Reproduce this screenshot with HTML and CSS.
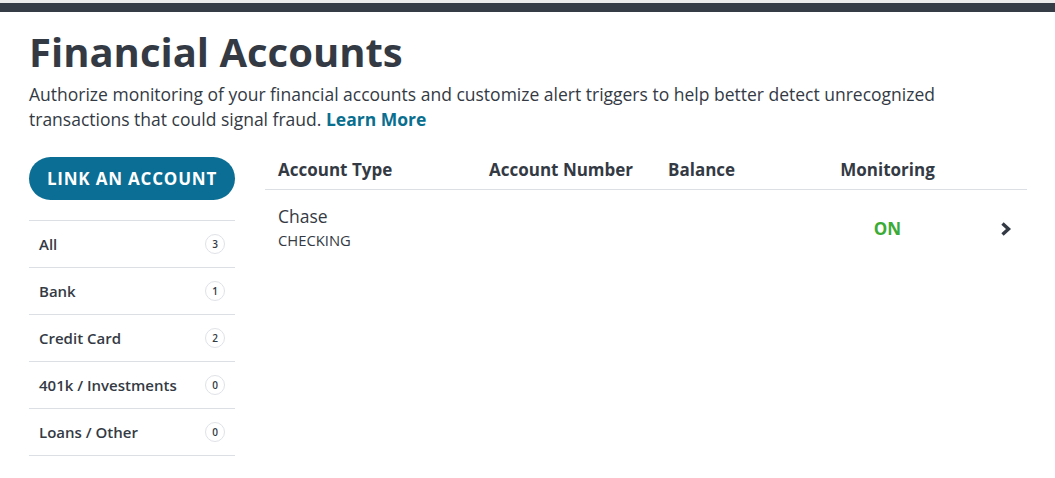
FILE: index.html
```html
<!DOCTYPE html>
<html lang="en">
<head>
<meta charset="utf-8">
<title>Financial Accounts</title>
<link rel="stylesheet" href="styles.css">
</head>
<body>
<div class="topbar"></div>
<main class="page">
  <h1 class="title">Financial Accounts</h1>
  <p class="intro">Authorize monitoring of your financial accounts and customize alert triggers to help better detect unrecognized transactions that could signal fraud. <a class="learn" href="#">Learn More</a></p>
  <div class="layout">
    <aside class="sidebar">
      <button class="link-btn">LINK AN ACCOUNT</button>
      <ul class="filters">
        <li class="filter"><span>All</span><span class="badge">3</span></li>
        <li class="filter"><span>Bank</span><span class="badge">1</span></li>
        <li class="filter"><span>Credit Card</span><span class="badge">2</span></li>
        <li class="filter"><span>401k / Investments</span><span class="badge">0</span></li>
        <li class="filter"><span>Loans / Other</span><span class="badge">0</span></li>
      </ul>
    </aside>
    <section class="table">
      <div class="row head">
        <div>Account Type</div>
        <div>Account Number</div>
        <div>Balance</div>
        <div class="center">Monitoring</div>
        <div></div>
      </div>
      <div class="row item">
        <div class="acct">
          <div class="acct-name">Chase</div>
          <div class="acct-type">CHECKING</div>
        </div>
        <div></div>
        <div></div>
        <div class="center status">ON</div>
        <div class="chev">
          <svg width="12" height="16" viewBox="0 0 12 16"><path d="M2.5 2.5 L8.5 8 L2.5 13.5" fill="none" stroke="#343a44" stroke-width="3.4" stroke-linejoin="miter"/></svg>
        </div>
      </div>
    </section>
  </div>
</main>
</body>
</html>
```
FILE: styles.css
```css
* { box-sizing: border-box; }
body {
  margin: 0;
  font-family: "Open Sans", "Noto Sans", sans-serif;
  color: #343a44;
  background: #fff;
}
.topbar {
  height: 12px;
  border-top: 3px solid #ebebeb;
  background: #353c46;
}
.page {
  padding: 0 28px 0 29px;
}
.title {
  margin: 16px 0 0;
  font-size: 40px;
  line-height: 48px;
  font-weight: 700;
}
.intro {
  margin: 6px 0 0;
  font-size: 17.5px;
  line-height: 25px;
}
.learn {
  color: #0a6f8f;
  font-weight: 700;
  text-decoration: none;
}
.layout {
  display: flex;
  gap: 30px;
  margin-top: 25px;
}
.sidebar {
  width: 206px;
  flex: none;
}
.link-btn {
  display: block;
  width: 206px;
  height: 43px;
  border: 0;
  border-radius: 22px;
  background: #0b6e94;
  color: #fff;
  font-family: inherit;
  font-size: 17px;
  font-weight: 700;
  letter-spacing: 0.8px;
  padding: 0;
}
.filters {
  list-style: none;
  margin: 20px 0 0;
  padding: 0;
  border-top: 1px solid #dcdfe3;
}
.filter {
  display: flex;
  align-items: center;
  justify-content: space-between;
  height: 47px;
  padding: 0 10px 0 10px;
  border-bottom: 1px solid #dcdfe3;
  font-size: 15px;
  font-weight: 600;
}
.badge {
  width: 20px;
  height: 20px;
  border: 1px solid #dfe2e6;
  border-radius: 50%;
  display: flex;
  align-items: center;
  justify-content: center;
  font-size: 10px;
  font-weight: 600;
}
.table {
  flex: 1;
}
.row {
  display: grid;
  grid-template-columns: 211px 179px 171px 97px 1fr;
  padding-left: 13px;
}
.head {
  font-size: 17px;
  font-weight: 700;
  line-height: 24px;
  padding-top: 1px;
  padding-bottom: 7px;
  border-bottom: 1px solid #dcdfe3;
}
.center { text-align: center; }
.item {
  align-items: center;
  padding-top: 14px;
}
.acct-name {
  font-size: 17.5px;
  line-height: 24px;
}
.acct-type {
  font-size: 14.8px;
  line-height: 20px;
  margin-top: 2px;
}
.status {
  color: #3bab36;
  font-weight: 700;
  font-size: 17px;
  margin-top: 3px;
}
.chev {
  display: flex;
  justify-content: flex-end;
  padding-right: 15px;
  margin-top: 3px;
}
.chev svg { display: block; }
```
